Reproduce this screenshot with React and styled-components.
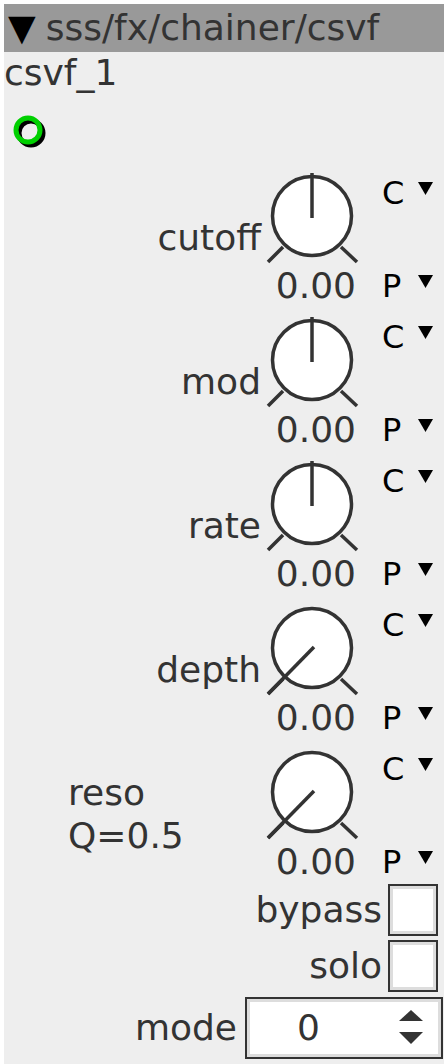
import styled, { createGlobalStyle } from "styled-components";

const GlobalStyle = createGlobalStyle`
    body {
        margin: 0;
        padding: 4px 4px 0 4px;
        background: #fff;
        font-family: "DejaVu Sans", "Liberation Sans", sans-serif;
        color: #333;
    }
`;

const Panel = styled.div`
    width: 440px;
    min-height: 1060px;
    background: #eee;
    display: flex;
    flex-direction: column;
`;

const Header = styled.div`
    height: 48px;
    line-height: 48px;
    background: #999;
    font-size: 36px;
    padding-left: 4px;
    white-space: nowrap;
    overflow: hidden;
`;

const Arrow = styled.span`
    color: #000;
    margin-right: 10px;
`;

const Title = styled.div`
    font-size: 36px;
    line-height: 42px;
`;

const PortRow = styled.div`
    height: 76px;
    padding: 20px 0 0 9px;
    box-sizing: border-box;
`;

const KnobList = styled.div`
    display: flex;
    flex-direction: column;
    gap: 8px;
`;

const KnobRow = styled.div`
    display: grid;
    grid-template-columns: 1fr 96px 84px;
    grid-template-rows: 96px 40px;
    height: 136px;
`;

const Label = styled.div`
    grid-row: 1 / 3;
    align-self: center;
    font-size: 36px;
    line-height: ${(p) => (p.$multi ? "43px" : "42px")};
    text-align: ${(p) => (p.$multi ? "left" : "right")};
    padding: ${(p) => (p.$multi ? "0 0 0 64px" : "0 3px 0 0")};
`;

const KnobSvg = styled.svg`
    display: block;
`;

const Value = styled.div`
    grid-column: 2;
    font-size: 36px;
    line-height: 40px;
    text-align: right;
    margin-right: 4px;
    white-space: nowrap;
`;

const Assign = styled.div`
    grid-column: 3;
    grid-row: 1 / 3;
    display: flex;
    flex-direction: column;
    justify-content: space-between;
    padding: 8px 0 5px 22px;
`;

const AssignLine = styled.div`
    display: flex;
    align-items: flex-start;
    color: #000;
    font-size: 32px;
    line-height: 30px;
    height: 30px;
`;

const AssignLetter = styled.span`
    width: 36px;
`;

const Tri = styled.svg`
    margin-top: 4px;
`;

const CheckRow = styled.div`
    display: flex;
    justify-content: flex-end;
    align-items: center;
    height: 56px;
    padding-right: 6px;
    gap: 6px;
`;

const RowLabel = styled.span`
    font-size: 36px;
    line-height: 42px;
`;

const Check = styled.div`
    width: 50px;
    height: 52px;
    box-sizing: border-box;
    border: 2px solid #333;
    box-shadow: inset 0 0 0 3px #ddd;
    background: #fff;
`;

const ModeRow = styled.div`
    display: flex;
    justify-content: flex-end;
    align-items: center;
    gap: 8px;
    padding: 3px 1px 0 0;
`;

const Select = styled.div`
    width: 198px;
    height: 62px;
    box-sizing: border-box;
    border: 2px solid #333;
    box-shadow: inset 0 0 0 3px #ddd;
    background: #fff;
    display: flex;
    align-items: center;
    padding: 0 18px 0 0;
`;

const SelectValue = styled.span`
    flex: 1;
    text-align: left;
    font-size: 36px;
    line-height: 42px;
    padding-left: 50px;
`;

function Knob({ angled }) {
    return (
        <KnobSvg width="96" height="96" viewBox="0 0 96 96">
            <circle cx="48" cy="46" r="39.5" fill="#fff" stroke="#333" strokeWidth="3.5" />
            <line x1="4" y1="92" x2="19" y2="77" stroke="#333" strokeWidth="3.5" />
            <line x1="77" y1="77" x2="93" y2="92" stroke="#333" strokeWidth="3.5" />
            {angled ? (
                <line x1="50" y1="45" x2="4" y2="92" stroke="#333" strokeWidth="3.5" />
            ) : (
                <line x1="48" y1="48" x2="48" y2="3" stroke="#333" strokeWidth="3.5" />
            )}
        </KnobSvg>
    );
}

function Triangle() {
    return (
        <Tri width="15" height="13" viewBox="0 0 15 13">
            <polygon points="0,0 15,0 7.5,13" fill="#000" />
        </Tri>
    );
}

const knobs = [
    { name: "cutoff" },
    { name: "mod" },
    { name: "rate" },
    { name: "depth", angled: true },
    { name: "reso", sub: "Q=0.5", angled: true },
];

export default function App() {
    return (
        <>
            <GlobalStyle />
            <Panel>
                <Header>
                    <Arrow>▼</Arrow>sss/fx/chainer/csvf
                </Header>
                <Title>csvf_1</Title>
                <PortRow>
                    <svg width="40" height="40" viewBox="0 0 40 40">
                        <circle cx="18" cy="19" r="12" fill="none" stroke="#000" strokeWidth="5" />
                        <circle cx="15" cy="16" r="12" fill="none" stroke="#00d000" strokeWidth="5" />
                    </svg>
                </PortRow>
                <KnobList>
                    {knobs.map((k) => (
                        <KnobRow key={k.name}>
                            {k.sub ? (
                                <Label $multi>
                                    {k.name}
                                    <br />
                                    {k.sub}
                                </Label>
                            ) : (
                                <Label>{k.name}</Label>
                            )}
                            <Knob angled={k.angled} />
                            <Value>0.00</Value>
                            <Assign>
                                <AssignLine>
                                    <AssignLetter>C</AssignLetter>
                                    <Triangle />
                                </AssignLine>
                                <AssignLine>
                                    <AssignLetter>P</AssignLetter>
                                    <Triangle />
                                </AssignLine>
                            </Assign>
                        </KnobRow>
                    ))}
                </KnobList>
                <CheckRow>
                    <RowLabel>bypass</RowLabel>
                    <Check />
                </CheckRow>
                <CheckRow>
                    <RowLabel>solo</RowLabel>
                    <Check />
                </CheckRow>
                <ModeRow>
                    <RowLabel>mode</RowLabel>
                    <Select>
                        <SelectValue>0</SelectValue>
                        <svg width="24" height="36" viewBox="0 0 24 36">
                            <polygon points="12,0 24,11 0,11" fill="#333" />
                            <polygon points="0,22 24,22 12,34" fill="#333" />
                        </svg>
                    </Select>
                </ModeRow>
            </Panel>
        </>
    );
}
